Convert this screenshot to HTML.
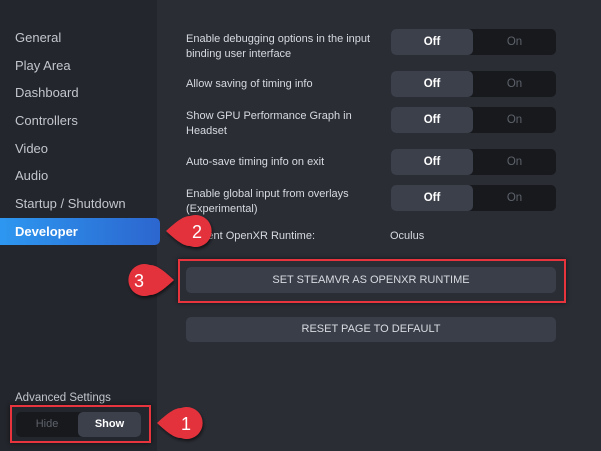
<!DOCTYPE html>
<html><head><meta charset="utf-8"><style>
*{margin:0;padding:0;box-sizing:border-box}
body{width:601px;height:451px;overflow:hidden;background:#2a2d34;font-family:"Liberation Sans",sans-serif;position:relative}
.side{position:absolute;left:0;top:0;width:157px;height:451px;background:#23262c}
.nav{position:absolute;left:15px;font-size:13px;color:#c3c6cc}
.dev{position:absolute;left:0;top:218px;width:160px;height:27px;border-radius:0 5px 5px 0;background:linear-gradient(90deg,#2d97f0,#2c66cf);color:#fff;font-size:13px;font-weight:bold;padding:6px 15px}
.lbl{position:absolute;left:186px;font-size:11px;color:#d7dae0;line-height:15px;width:195px}
.tg{position:absolute;left:391px;width:165px;height:26px;border-radius:5px;background:#17191d;font-size:11.5px}
.tg .a{position:absolute;left:0;top:0;width:82px;height:26px;border-radius:5px;background:#3c404b;color:#fff;font-weight:bold;text-align:center;line-height:26px}
.tg .b{position:absolute;left:82px;top:0;width:83px;text-align:center;line-height:26px;color:#5e626b}
.btn{position:absolute;left:186px;width:370px;border-radius:5px;background:#3a3e49;color:#d8dbe0;font-size:11px;text-align:center}
.red{position:absolute;border:2px solid #e8343c;box-shadow:0 0 4px rgba(0,0,0,.6)}
</style></head><body>
<div class="side"></div>
<div class="nav" style="top:30px">General</div>
<div class="nav" style="top:58px">Play Area</div>
<div class="nav" style="top:85px">Dashboard</div>
<div class="nav" style="top:113px">Controllers</div>
<div class="nav" style="top:141px">Video</div>
<div class="nav" style="top:168px">Audio</div>
<div class="nav" style="top:196px">Startup / Shutdown</div>
<div class="dev">Developer</div>
<div class="nav" style="top:392px;font-size:11.5px">Advanced Settings</div>
<div class="red" style="left:10px;top:405px;width:141px;height:38px"></div>
<div style="position:absolute;left:16px;top:412px;width:125px;height:25px;border-radius:5px;background:#17191d;font-size:11px">
<div style="position:absolute;left:0;width:62px;text-align:center;line-height:25px;color:#5e626b">Hide</div>
<div style="position:absolute;left:62px;width:63px;height:25px;border-radius:5px;background:#3c404b;color:#fff;font-weight:bold;text-align:center;line-height:25px">Show</div></div>

<div class="lbl" style="top:32px">Enable debugging options in the input binding user interface</div>
<div class="tg" style="top:29px"><div class="a">Off</div><div class="b">On</div></div>
<div class="lbl" style="top:77px">Allow saving of timing info</div>
<div class="tg" style="top:71px"><div class="a">Off</div><div class="b">On</div></div>
<div class="lbl" style="top:109px">Show GPU Performance Graph in Headset</div>
<div class="tg" style="top:107px"><div class="a">Off</div><div class="b">On</div></div>
<div class="lbl" style="top:155px">Auto-save timing info on exit</div>
<div class="tg" style="top:149px"><div class="a">Off</div><div class="b">On</div></div>
<div class="lbl" style="top:187px">Enable global input from overlays (Experimental)</div>
<div class="tg" style="top:185px"><div class="a">Off</div><div class="b">On</div></div>
<div class="lbl" style="top:229px">Current OpenXR Runtime:</div>
<div class="lbl" style="top:229px;left:390px">Oculus</div>

<div class="red" style="left:178px;top:259px;width:388px;height:44px"></div>
<div class="btn" style="top:267px;height:26px;line-height:26px">SET STEAMVR AS OPENXR RUNTIME</div>
<div class="btn" style="top:317px;height:25px;line-height:25px">RESET PAGE TO DEFAULT</div>

<svg width="601" height="451" style="position:absolute;left:0;top:0" font-family="Liberation Sans" font-size="18" fill="#fff">
<defs><filter id="s" x="-30%" y="-30%" width="160%" height="160%"><feDropShadow dx="1" dy="2" stdDeviation="1.5" flood-opacity="0.6"/></filter></defs>
<g fill="#e4333c" filter="url(#s)">
<path d="M166,231 C176,222 183,216 190,216 A16,16 0 1 1 190,246 C183,246 176,240 166,231 Z"/>
<path d="M174,280 C164,271 157,265 150,265 A16,16 0 1 0 150,295 C157,295 164,289 174,280 Z"/>
<path d="M157,423 C167,414 174,408 181,408 A16,16 0 1 1 181,438 C174,438 167,432 157,423 Z"/>
</g>
<text x="192" y="238">2</text>
<text x="134" y="287">3</text>
<text x="181" y="430">1</text>
</svg>
</body></html>
